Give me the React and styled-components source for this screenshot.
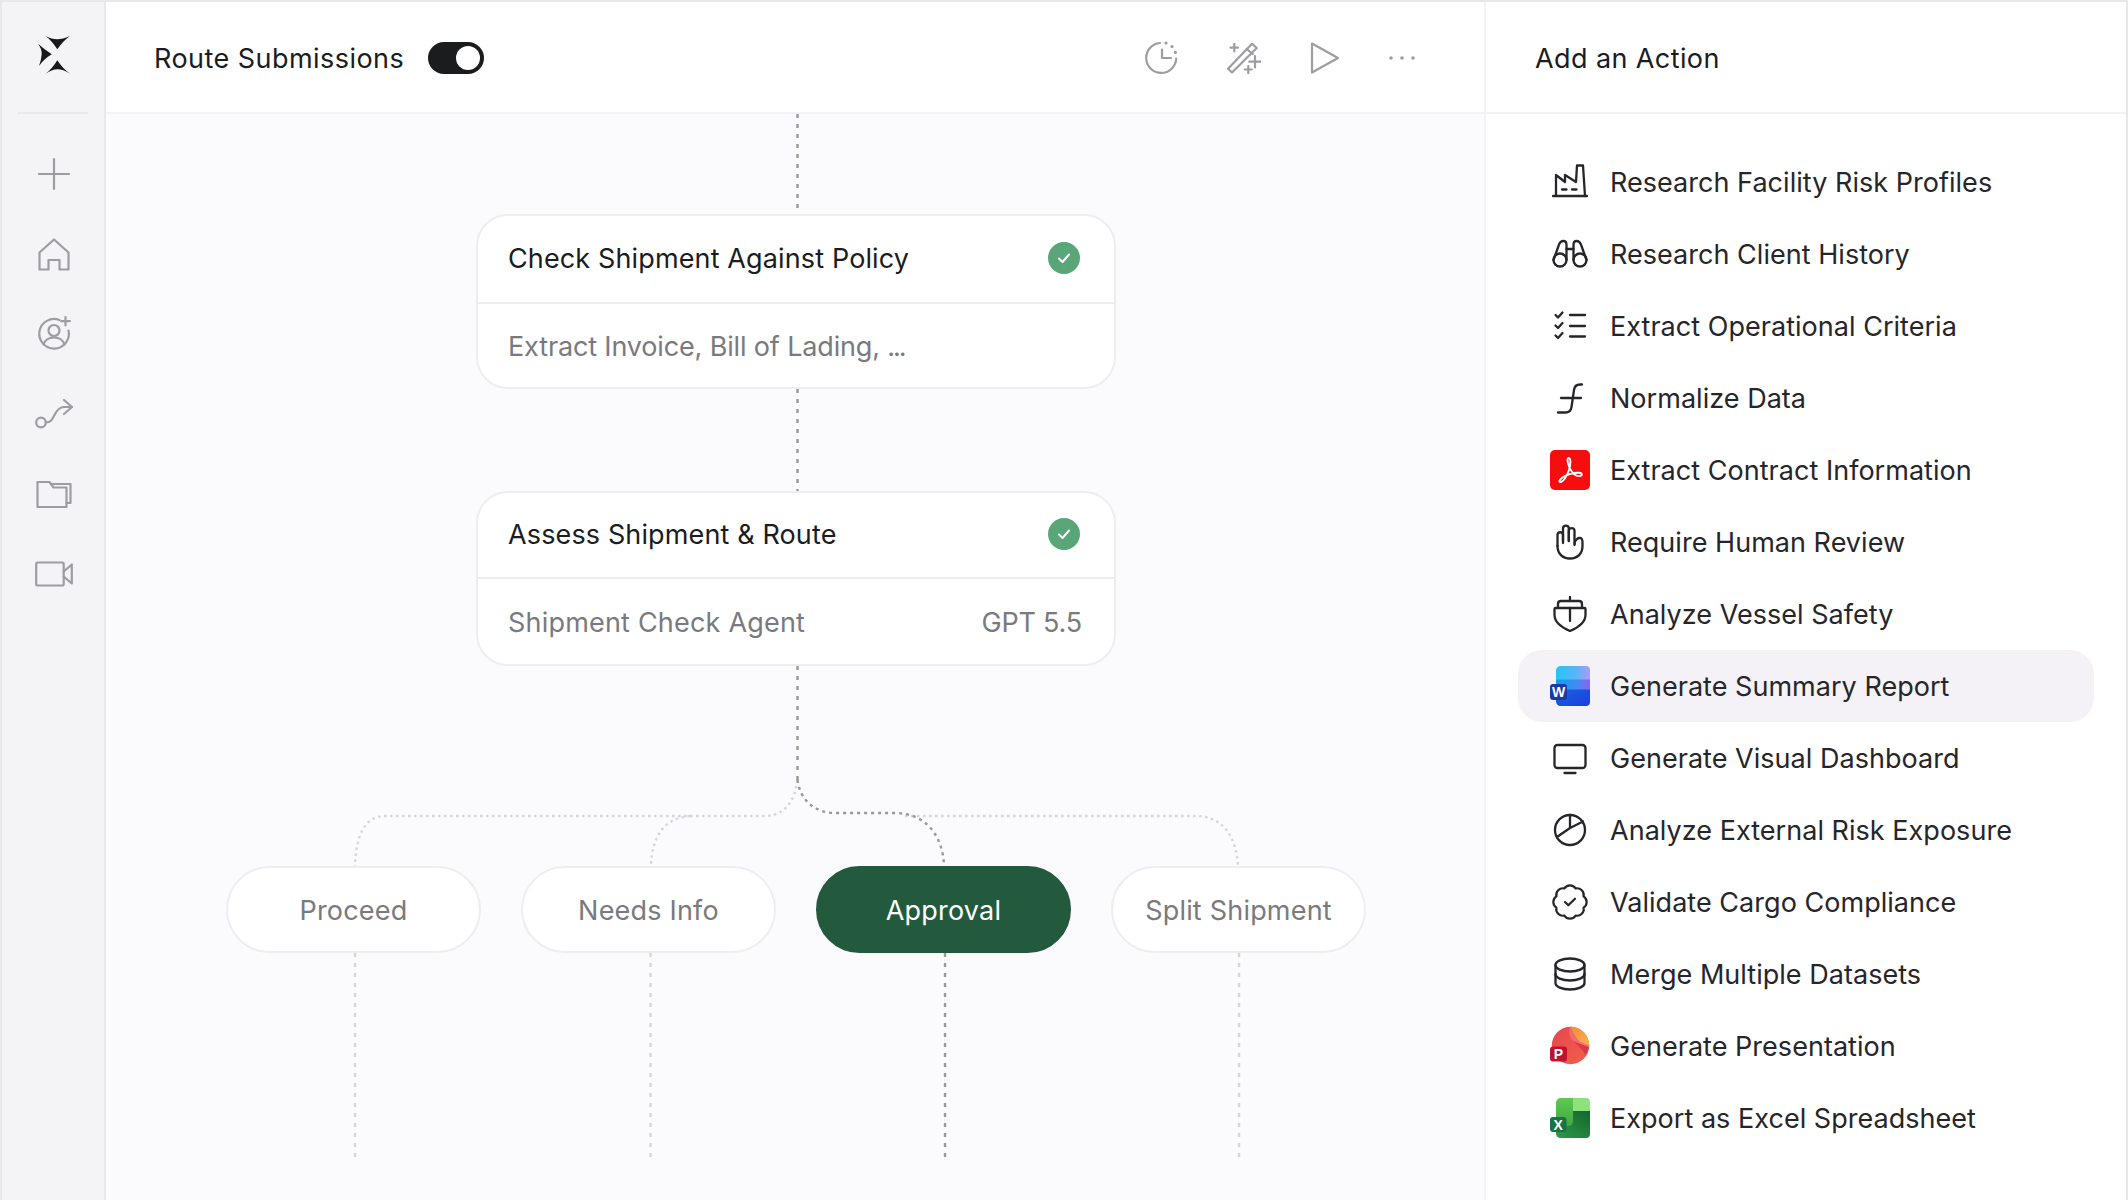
import React from "react";
import styled, { createGlobalStyle } from "styled-components";
import { BadgeCheck } from "lucide-react";

const GlobalStyle = createGlobalStyle`
  html, body {
    margin: 0;
    padding: 0;
    background: #ffffff;
  }
  * {
    box-sizing: border-box;
  }
`;

const FONT = `Inter, "Liberation Sans", sans-serif`;

function Logo() {
  return (
    <LogoMark width="32" height="38" viewBox="0 0 32 38">
      <path d="M7.7 0Q14 3.4 19.3 3.3T32 0Q25 5 19.3 13.3Q14 5 7.7 0Z" />
      <path d="M7.7 37.7Q14 33.5 19.3 33.3T32 37.7Q25 33 19.3 24.3Q14 33 7.7 37.7Z" />
      <path d="M0 7.7Q4 13 3.7 18.3T1 30Q6 23 13.7 18.3Q6 13 0 7.7Z" />
    </LogoMark>
  );
}

function PlusIcon() {
  return (
    <NavSvg width="36" height="36" viewBox="0 0 36 36">
      <path d="M18 3V33M3 18H33" />
    </NavSvg>
  );
}

function HomeIcon() {
  return (
    <NavSvg width="36" height="36" viewBox="0 0 36 36">
      <path d="M3.5 16.5L18 3.5L32.5 16.5V33.5H23.5V24H12.5V33.5H3.5Z" />
    </NavSvg>
  );
}

function PersonIcon() {
  return (
    <NavSvg width="36" height="36" viewBox="0 0 36 36">
      <path d="M23.5 4A14.8 14.8 0 1 0 32.5 14.5" />
      <circle cx="18" cy="14.5" r="5.5" />
      <path d="M7.5 28.5C9 24 13 21.5 18 21.5S27 24 28.5 28.5" />
      <path d="M29.5 1V9.5M25.2 5.2H33.8" />
    </NavSvg>
  );
}

function RouteIcon() {
  return (
    <NavSvg width="38" height="30" viewBox="0 0 38 30">
      <circle cx="6" cy="23.5" r="4.8" />
      <path d="M10.8 23.5C16 23.5 17.5 20 19.5 16C21.5 12 24 8 29 8H37" />
      <path d="M29 1L37 8L29 15" />
    </NavSvg>
  );
}

function FolderIcon() {
  return (
    <NavSvg width="36" height="30" viewBox="0 0 36 30">
      <path d="M1.5 28V3H13.5L17.5 8.5H30.5V28Z" />
      <path d="M15.5 5H34.5V24H30.5" />
    </NavSvg>
  );
}

function VideoIcon() {
  return (
    <NavSvg width="38" height="26" viewBox="0 0 38 26">
      <rect x="1.2" y="1.5" width="27.5" height="23" rx="1.5" />
      <path d="M28.7 10.5L36.8 3.5V22.5L28.7 15.5" />
    </NavSvg>
  );
}

function HistoryIcon() {
  return (
    <HistorySvg width="34" height="34" viewBox="0 0 34 34">
      <path d="M15 2A15 15 0 1 0 31.2 17.5" />
      <path d="M17 8.5V17H26" />
      <circle className="dot" cx="21" cy="2" r="1.6" />
      <circle className="dot" cx="27" cy="5.6" r="1.6" />
      <circle className="dot" cx="30.4" cy="11.4" r="1.6" />
    </HistorySvg>
  );
}

function WandIcon() {
  return (
    <TopSvg width="34" height="31" viewBox="0 0 34 31">
      <path d="M1 25.8L5 29.5L29.7 5L25 .8Z" />
      <path d="M19.7 6L25.7 11" />
      <path d="M7.3 1V8.5M3.5 4.7H11" />
      <path d="M28 13V24.5M22.3 18.7H33.7" />
      <path d="M21.3 23V30M17.8 26.5H24.8" />
    </TopSvg>
  );
}

function PlayIcon() {
  return (
    <TopSvg width="30" height="34" viewBox="0 0 30 34">
      <path d="M2 2.5L28 17L2 31.5Z" />
    </TopSvg>
  );
}

function MoreIcon() {
  return (
    <TopSvg width="26" height="6" viewBox="0 0 26 6">
      <circle className="dot" cx="2" cy="3" r="1.8" />
      <circle className="dot" cx="13" cy="3" r="1.8" />
      <circle className="dot" cx="24" cy="3" r="1.8" />
    </TopSvg>
  );
}

function FactoryIcon() {
  return (
    <ActionSvg viewBox="0 0 36 36">
      <path d="M1 32H35" />
      <path d="M4 32V11L13 18V11L24 18L25 1.5H31L33 32" />
      <path d="M10 25.5H14.5M20 25.5H24.5" />
    </ActionSvg>
  );
}

function BinocularsIcon() {
  return (
    <ActionSvg viewBox="0 0 36 36">
      <circle cx="8" cy="24" r="6.5" />
      <circle cx="28" cy="24" r="6.5" />
      <path d="M1.5 24L6.5 10C7.5 6.5 9.5 5 11.5 5C13.5 5 14.5 6.5 14.5 9V24" />
      <path d="M34.5 24L29.5 10C28.5 6.5 26.5 5 24.5 5C22.5 5 21.5 6.5 21.5 9V24" />
      <path d="M14.5 13H21.5" />
    </ActionSvg>
  );
}

function ChecklistIcon() {
  return (
    <ActionSvg viewBox="0 0 36 36">
      <path d="M18 7H33M18 18H33M18 28.5H33" />
      <path d="M3.5 7L6 9.5L10.5 4.5M3.5 17.5L6 20L10.5 15M3.5 27.5L6 30L10.5 25" />
    </ActionSvg>
  );
}

function FunctionIcon() {
  return (
    <ActionSvg viewBox="0 0 36 36">
      <path d="M30 4.5H28C24.5 4.5 22.5 6.5 22 10L19.5 27C19 30.5 17 32.5 13.5 32.5H6" />
      <path d="M9 18H29" />
    </ActionSvg>
  );
}

function PdfIcon() {
  return (
    <BrandSvg viewBox="0 0 40 40">
      <rect width="40" height="40" rx="5" fill="#f60d0d" />
      <path
        d="M18.6 8C16.8 8.3 17.4 13.5 20 18.6C22.6 23.6 26.6 26.6 30 26C33 25.4 32.2 23 29 22.8C23.4 22.4 15.5 25 11.8 28C8.8 30.4 8.8 32.6 11 32C13.5 31.2 17 25.5 19 20C20.6 15 21.2 7.6 18.6 8Z"
        fill="none"
        stroke="#ffffff"
        strokeWidth="1.9"
        strokeLinejoin="round"
      />
    </BrandSvg>
  );
}

function HandIcon() {
  return (
    <ActionSvg viewBox="0 0 36 36">
      <path d="M5.5 22V10.5A2.8 2.8 0 0 1 11 10.5V19" />
      <path d="M11 17V4.5A2.9 2.9 0 0 1 16.8 4.5V17" />
      <path d="M16.8 17V6.5A2.9 2.9 0 0 1 22.5 6.5V20" />
      <path d="M22.5 21C22.5 17.5 24.5 14.5 27 14C29.5 13.5 30.5 15.5 30.5 18V22C30.5 29.5 25.5 34.5 18 34.5C10.5 34.5 5.5 29.5 5.5 22" />
    </ActionSvg>
  );
}

function ShipIcon() {
  return (
    <ActionSvg viewBox="0 0 36 36">
      <path d="M18 1V5" />
      <path d="M6 12V8C6 6 7.5 5 9 5H27C28.5 5 30 6 30 8V12" />
      <path d="M2.5 13C2.5 12.4 3 12 3.5 12H32.5C33 12 33.5 12.4 33.5 13V19C33.5 27 25 32 18 35C11 32 2.5 27 2.5 19Z" />
      <path d="M18 12V25" />
    </ActionSvg>
  );
}

function WordIcon() {
  return (
    <BrandSvg viewBox="0 0 40 40">
      <defs>
        <linearGradient id="wordTop" x1="0" x2="1" y1="0" y2="0">
          <stop offset="0" stopColor="#27c4f6" />
          <stop offset="0.6" stopColor="#5bb4f8" />
          <stop offset="1" stopColor="#ab9cf8" />
        </linearGradient>
        <linearGradient id="wordMid" x1="0" x2="1" y1="0" y2="0">
          <stop offset="0" stopColor="#12a0ee" />
          <stop offset="0.6" stopColor="#3f8cf2" />
          <stop offset="1" stopColor="#8f62f4" />
        </linearGradient>
        <linearGradient id="wordLow" x1="0" x2="1" y1="0" y2="1">
          <stop offset="0" stopColor="#1a63dc" />
          <stop offset="1" stopColor="#1a3ee0" />
        </linearGradient>
      </defs>
      <path d="M6 5C6 2 8 0 11 0H36C38.5 0 40 1.5 40 4V14H6Z" fill="url(#wordTop)" />
      <rect x="6" y="13.5" width="34" height="10.5" fill="url(#wordMid)" />
      <path d="M6 23.5H40V36C40 38.5 38.5 40 36 40H11C8 40 6 38 6 35Z" fill="url(#wordLow)" />
      <rect y="18" width="17" height="16" rx="3" fill="#1a3aa8" />
      <BadgeLetter x="8.5" y="31" fontSize="14">W</BadgeLetter>
    </BrandSvg>
  );
}

function MonitorIcon() {
  return (
    <ActionSvg viewBox="0 0 36 36">
      <rect x="2.5" y="5" width="31" height="23" rx="3" />
      <path d="M12.5 33H23.5" />
    </ActionSvg>
  );
}

function PieIcon() {
  return (
    <ActionSvg viewBox="0 0 36 36">
      <circle cx="18" cy="18" r="15" />
      <path d="M18 3V16L31 9.5M18 16L5 25" />
    </ActionSvg>
  );
}

function ComplianceIcon() {
  return <BadgeCheck size={42} strokeWidth={1.3} color="#26262a" />;
}

function DatabaseIcon() {
  return (
    <ActionSvg viewBox="0 0 36 36">
      <ellipse cx="18" cy="9" rx="14.5" ry="6.5" />
      <path d="M3.5 9V27C3.5 30.6 10 33.5 18 33.5S32.5 30.6 32.5 27V9" />
      <path d="M3.5 18C3.5 21.6 10 24.5 18 24.5S32.5 21.6 32.5 18" />
    </ActionSvg>
  );
}

function PowerPointIcon() {
  return (
    <BrandSvg viewBox="0 0 40 40">
      <defs>
        <linearGradient id="pptBase" x1="0" x2="1" y1="0" y2="1">
          <stop offset="0" stopColor="#e8464e" />
          <stop offset="1" stopColor="#f0604a" />
        </linearGradient>
        <linearGradient id="pptTop" x1="0" x2="1" y1="0" y2="1">
          <stop offset="0" stopColor="#f78a3c" />
          <stop offset="1" stopColor="#fbb24a" />
        </linearGradient>
      </defs>
      <circle cx="20.5" cy="19.5" r="18.7" fill="url(#pptBase)" />
      <path d="M20 .8A18.7 18.7 0 0 1 39.2 19.5L30 16C27 14 24 8 20 .8Z" fill="url(#pptTop)" />
      <path d="M20 .8C24 8 27 14 30 16L23 15C20 12 18 6 20 .8Z" fill="#f26a6d" />
      <path d="M23 15L39 21C38.5 24 37 27 35.5 29C33 24 28 19 23 15Z" fill="#d8394a" />
      <path d="M23 15L30 16L39.2 19.5L39 21Z" fill="#fb6d8c" />
      <rect y="20.5" width="17" height="15" rx="3" fill="#c0122e" />
      <BadgeLetter x="8.5" y="33" fontSize="14">P</BadgeLetter>
    </BrandSvg>
  );
}

function ExcelIcon() {
  return (
    <BrandSvg viewBox="0 0 40 40">
      <defs>
        <linearGradient id="xlLeft" x1="0" x2="0" y1="0" y2="1">
          <stop offset="0" stopColor="#5ec94f" />
          <stop offset="1" stopColor="#3fa545" />
        </linearGradient>
        <linearGradient id="xlLow" x1="0" x2="1" y1="1" y2="0">
          <stop offset="0" stopColor="#2f9a46" />
          <stop offset="1" stopColor="#15662f" />
        </linearGradient>
      </defs>
      <path d="M6 5C6 2 8 0 11 0H23V30H6Z" fill="url(#xlLeft)" />
      <path d="M23 0H36C38.5 0 40 1.5 40 4V13H23Z" fill="#8ee27a" />
      <path d="M23 13H40V36C40 38.5 38.5 40 36 40H11C8 40 6 38 6 35V28H18C21 28 23 26 23 23Z" fill="url(#xlLow)" />
      <rect y="19" width="16.5" height="15" rx="3" fill="#14744c" />
      <BadgeLetter x="8.2" y="31.5" fontSize="14">X</BadgeLetter>
    </BrandSvg>
  );
}

function CheckBadge() {
  return (
    <Done>
      <svg width="16" height="16" viewBox="0 0 16 16" fill="none" stroke="#ffffff" strokeWidth="2" strokeLinecap="round" strokeLinejoin="round">
        <path d="M3 8.5L6.5 12L13 4.5" />
      </svg>
    </Done>
  );
}

const ACTIONS = [
  { label: "Research Facility Risk Profiles", Icon: FactoryIcon },
  { label: "Research Client History", Icon: BinocularsIcon },
  { label: "Extract Operational Criteria", Icon: ChecklistIcon },
  { label: "Normalize Data", Icon: FunctionIcon },
  { label: "Extract Contract Information", Icon: PdfIcon },
  { label: "Require Human Review", Icon: HandIcon },
  { label: "Analyze Vessel Safety", Icon: ShipIcon },
  { label: "Generate Summary Report", Icon: WordIcon, active: true },
  { label: "Generate Visual Dashboard", Icon: MonitorIcon },
  { label: "Analyze External Risk Exposure", Icon: PieIcon },
  { label: "Validate Cargo Compliance", Icon: ComplianceIcon },
  { label: "Merge Multiple Datasets", Icon: DatabaseIcon },
  { label: "Generate Presentation", Icon: PowerPointIcon },
  { label: "Export as Excel Spreadsheet", Icon: ExcelIcon },
];

const NAV_ICONS = [PlusIcon, HomeIcon, PersonIcon, RouteIcon, FolderIcon, VideoIcon];
const OUTCOMES = ["Proceed", "Needs Info", "Approval", "Split Shipment"];

function Connectors() {
  return (
    <Wires viewBox="106 114 1378 1086">
      <g className="faint">
        <path d="M797.5 780C795 800 785 816 765 816H385C365 816 356 835 355 866" />
        <path d="M690 816C665 818 652 835 651 866" />
        <path d="M905 816H1195C1222 816 1236 835 1238 866" />
      </g>
      <g className="faint long">
        <path d="M355 953V1161M650.5 953V1161M1239 953V1161" />
      </g>
      <g className="strong">
        <path d="M797.5 780C800 800 815 813 835 813H895C925 813 943 835 944 866" />
      </g>
      <g className="strong long">
        <path d="M797.5 114V214M797.5 389V491M797.5 666V780M945 953V1161" />
      </g>
    </Wires>
  );
}

export default function App() {
  return (
    <>
      <GlobalStyle />
      <Frame>
        <Sidebar>
          <LogoCell>
            <Logo />
          </LogoCell>
          <Nav>
            {NAV_ICONS.map((Icon, i) => (
              <NavItem key={i}>
                <Icon />
              </NavItem>
            ))}
          </Nav>
        </Sidebar>

        <Main>
          <Header>
            <Title>Route Submissions</Title>
            <Toggle>
              <Knob />
            </Toggle>
            <Tools>
              <HistoryIcon />
              <WandIcon />
              <PlayIcon />
              <MoreIcon />
            </Tools>
          </Header>

          <Canvas>
            <Connectors />
            <StepCard $first>
              <StepHead $first>
                <StepTitle>Check Shipment Against Policy</StepTitle>
                <CheckBadge />
              </StepHead>
              <StepBody>
                <Summary>
                  Extract Invoice, Bill of Lading, <Dots>...</Dots>
                </Summary>
              </StepBody>
            </StepCard>
            <StepCard>
              <StepHead>
                <StepTitle>Assess Shipment &amp; Route</StepTitle>
                <CheckBadge />
              </StepHead>
              <StepBody>
                <span>Shipment Check Agent</span>
                <Model>GPT 5.5</Model>
              </StepBody>
            </StepCard>
            <Outcomes>
              {OUTCOMES.map((name) => (
                <Outcome key={name} $active={name === "Approval"}>
                  {name}
                </Outcome>
              ))}
            </Outcomes>
          </Canvas>
        </Main>

        <Panel>
          <PanelHeader>Add an Action</PanelHeader>
          <ActionList>
            {ACTIONS.map(({ label, Icon, active }) => (
              <ActionRow key={label} $active={active}>
                <ActionIcon>
                  <Icon />
                </ActionIcon>
                {label}
              </ActionRow>
            ))}
          </ActionList>
        </Panel>
      </Frame>
    </>
  );
}

const Frame = styled.div`
  display: flex;
  width: 2128px;
  height: 1200px;
  overflow: hidden;
  background: #ffffff;
  border: 2px solid #e8e7ea;
  border-bottom: 0;
  font-family: ${FONT};
`;

const Sidebar = styled.aside`
  display: flex;
  flex: 0 0 104px;
  flex-direction: column;
  align-items: center;
  background: #f4f3f6;
  border-right: 2px solid #e9e8eb;
`;

const LogoCell = styled.div`
  display: flex;
  align-items: center;
  justify-content: center;
  width: 70px;
  height: 112px;
  padding-left: 2px;
  padding-bottom: 4px;
  border-bottom: 2px solid #e9e8eb;
`;

const LogoMark = styled.svg`
  fill: #17191b;
`;

const Nav = styled.nav`
  display: flex;
  flex-direction: column;
  gap: 40px;
  padding-top: 40px;
  padding-left: 2px;
`;

const NavItem = styled.div`
  display: flex;
  align-items: center;
  justify-content: center;
  height: 40px;
`;

const NavSvg = styled.svg`
  fill: none;
  stroke: #9d9da1;
  stroke-width: 2.2;
  stroke-linecap: round;
  stroke-linejoin: round;
`;

const Main = styled.main`
  display: flex;
  flex: 1;
  flex-direction: column;
  min-width: 0;
`;

const Header = styled.header`
  display: flex;
  flex: 0 0 112px;
  align-items: center;
  padding: 2px 69px 0 48px;
  background: #ffffff;
  border-bottom: 2px solid #f3f2f5;
`;

const Title = styled.h1`
  margin: 0;
  font-size: 27px;
  font-weight: 400;
  color: #1b1c1e;
  letter-spacing: 0.45px;
`;

const Toggle = styled.div`
  display: flex;
  align-items: center;
  justify-content: flex-end;
  width: 56px;
  height: 32px;
  margin-left: 24px;
  padding-right: 4px;
  background: #1a1c1d;
  border-radius: 16px;
`;

const Knob = styled.div`
  width: 24px;
  height: 24px;
  background: #ffffff;
  border-radius: 50%;
`;

const Tools = styled.div`
  display: flex;
  align-items: center;
  gap: 49px;
  margin-left: auto;
`;

const TopSvg = styled.svg`
  fill: none;
  stroke: #9d9da1;
  stroke-width: 2.2;
  stroke-linecap: round;
  stroke-linejoin: round;

  .dot {
    fill: #9d9da1;
    stroke: none;
  }
`;

const HistorySvg = styled(TopSvg)`
  margin-right: -1px;
`;

const Canvas = styled.section`
  position: relative;
  flex: 1;
  background: #fbfafd;
`;

const Wires = styled.svg`
  position: absolute;
  inset: 0;
  width: 100%;
  height: 100%;
  fill: none;
  stroke-width: 2.4;

  .faint {
    stroke: #d6d6da;
    stroke-dasharray: 2.5 3.5;
  }

  .strong {
    stroke: #98989c;
    stroke-dasharray: 3 4;
  }

  .long {
    stroke-dasharray: 4 6;
  }
`;

const StepCard = styled.article`
  position: relative;
  display: flex;
  flex-direction: column;
  width: 640px;
  height: 175px;
  margin-top: ${({ $first }) => ($first ? "100px" : "102px")};
  margin-left: 370px;
  background: #ffffff;
  border: 2px solid #eeedf0;
  border-radius: 32px;
`;

const StepHead = styled.div`
  display: flex;
  flex: 0 0 ${({ $first }) => ($first ? "88px" : "86px")};
  align-items: center;
  justify-content: space-between;
  padding: 0 34px 2px 30px;
  border-bottom: 2px solid #eeedf0;
`;

const StepTitle = styled.span`
  font-size: 27px;
  color: #1b1c1e;
  letter-spacing: 0.13px;
`;

const Done = styled.span`
  display: flex;
  align-items: center;
  justify-content: center;
  width: 32px;
  height: 32px;
  background: #59a679;
  border-radius: 50%;
`;

const StepBody = styled.div`
  display: flex;
  flex: 1;
  align-items: center;
  justify-content: space-between;
  padding: 2px 32px 0 30px;
  font-size: 27px;
  color: #7a7a7e;
  letter-spacing: 0.2px;
`;

const Summary = styled.span`
  letter-spacing: -0.15px;
`;

const Dots = styled.span`
  letter-spacing: -2px;
`;

const Model = styled.span`
  letter-spacing: -0.2px;
`;

const Outcomes = styled.div`
  position: relative;
  display: flex;
  gap: 40px;
  margin-top: 200px;
  margin-left: 120px;
`;

const Outcome = styled.div`
  display: flex;
  align-items: center;
  justify-content: center;
  width: 255px;
  height: 87px;
  padding-top: 1px;
  font-size: 27px;
  letter-spacing: 0.2px;
  color: ${({ $active }) => ($active ? "#ffffff" : "#7a7a7e")};
  background: ${({ $active }) => ($active ? "#235a3d" : "#ffffff")};
  border: 2px solid ${({ $active }) => ($active ? "#235a3d" : "#eeedf0")};
  border-radius: 44px;
`;

const Panel = styled.aside`
  display: flex;
  flex: 0 0 642px;
  flex-direction: column;
  background: #ffffff;
  border-left: 2px solid #f4f3f6;
`;

const PanelHeader = styled.div`
  display: flex;
  flex: 0 0 112px;
  align-items: center;
  padding: 2px 0 0 49px;
  font-size: 27px;
  color: #1b1c1e;
  letter-spacing: 0.4px;
  border-bottom: 2px solid #f3f2f5;
`;

const ActionList = styled.ul`
  margin: 0;
  padding: 32px 32px 0 32px;
  list-style: none;
`;

const ActionRow = styled.li`
  display: flex;
  align-items: center;
  gap: 20px;
  height: 72px;
  padding-left: 32px;
  font-size: 27px;
  color: #26262a;
  letter-spacing: 0.03px;
  background: ${({ $active }) => ($active ? "#f4f2f6" : "transparent")};
  border-radius: 24px;
`;

const ActionIcon = styled.span`
  display: flex;
  flex: 0 0 40px;
  align-items: center;
  justify-content: center;
  min-width: 0;
  height: 40px;
`;

const ActionSvg = styled.svg`
  width: 36px;
  height: 36px;
  fill: none;
  stroke: #26262a;
  stroke-width: 2.3;
  stroke-linecap: round;
  stroke-linejoin: round;
`;

const BrandSvg = styled.svg`
  width: 40px;
  height: 40px;
`;

const BadgeLetter = styled.text`
  font-family: "Liberation Sans", sans-serif;
  font-weight: 700;
  fill: #ffffff;
  text-anchor: middle;
`;
